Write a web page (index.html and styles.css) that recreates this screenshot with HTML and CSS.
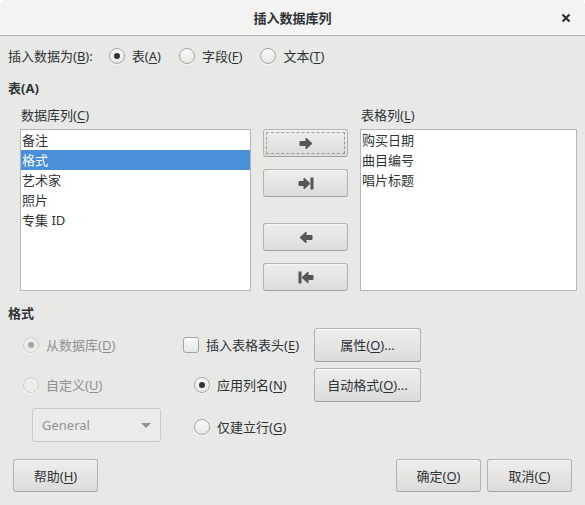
FILE: index.html
```html
<!DOCTYPE html>
<html lang="zh">
<head>
<meta charset="utf-8">
<title>插入数据库列</title>
<link rel="stylesheet" href="styles.css">
</head>
<body>
<div class="window">
  <div class="titlebar">
    <span class="title">插入数据库列</span>
    <span class="close">
      <svg width="10" height="10" viewBox="0 0 10 10"><path d="M1.5 1.5L8.5 8.5M8.5 1.5L1.5 8.5" stroke="#2e3436" stroke-width="2.2" stroke-linecap="butt"/></svg>
    </span>
  </div>
  <div class="content">
    <div class="insert-as">
      <span class="insert-label">插入数据为(<u>B</u>):</span>
      <span class="radio-item"><span class="radio checked"></span><span>表(<u>A</u>)</span></span>
      <span class="radio-item"><span class="radio"></span><span>字段(<u>F</u>)</span></span>
      <span class="radio-item"><span class="radio"></span><span>文本(<u>T</u>)</span></span>
    </div>

    <div class="section-title first">表(A)</div>

    <div class="columns">
      <div class="col-label">数据库列(<u>C</u>)</div>
      <div></div>
      <div class="col-label">表格列(<u>L</u>)</div>

      <div class="listbox">
        <div class="item">备注</div>
        <div class="item selected">格式</div>
        <div class="item">艺术家</div>
        <div class="item">照片</div>
        <div class="item">专集 ID</div>
      </div>

      <div class="movebtns">
        <div class="btn move focus">
          <svg width="14" height="13" viewBox="0 0 14 13"><path d="M1 4.5h6V1l6 5.5-6 5.5V8.5H1z" fill="#555753" stroke="#555753" stroke-width="1" stroke-linejoin="round"/></svg>
        </div>
        <div class="btn move gap-small">
          <svg width="16" height="13" viewBox="0 0 16 13"><path d="M1 4.5h5V1l6 5.5-6 5.5V8.5H1z" fill="#555753" stroke="#555753" stroke-width="1" stroke-linejoin="round"/><rect x="12.5" y="0.5" width="3" height="12" fill="#555753"/></svg>
        </div>
        <div class="btn move gap-large">
          <svg width="14" height="13" viewBox="0 0 14 13"><path d="M13 4.5H7V1L1 6.5 7 12V8.5h6z" fill="#555753" stroke="#555753" stroke-width="1" stroke-linejoin="round"/></svg>
        </div>
        <div class="btn move gap-small">
          <svg width="16" height="13" viewBox="0 0 16 13"><rect x="0.5" y="0.5" width="3" height="12" fill="#555753"/><path d="M15 4.5h-5V1L4 6.5 10 12V8.5h5z" fill="#555753" stroke="#555753" stroke-width="1" stroke-linejoin="round"/></svg>
        </div>
      </div>

      <div class="listbox">
        <div class="item">购买日期</div>
        <div class="item">曲目编号</div>
        <div class="item">唱片标题</div>
      </div>
    </div>

    <div class="section-title second">格式</div>

    <div class="format-grid">
      <span class="radio-item disabled"><span class="radio checked"></span><span>从数据库(<u>D</u>)</span></span>
      <span class="radio-item"><span class="checkbox"></span><span>插入表格表头(<u>E</u>)</span></span>
      <div class="btn fmt">属性(<u>O</u>)...</div>

      <span class="radio-item disabled"><span class="radio"></span><span>自定义(<u>U</u>)</span></span>
      <span class="radio-item indent"><span class="radio checked"></span><span>应用列名(<u>N</u>)</span></span>
      <div class="btn fmt">自动格式(<u>O</u>)...</div>

      <div class="combo"><span>General</span><span class="caret"></span></div>
      <span class="radio-item indent low"><span class="radio"></span><span>仅建立行(<u>G</u>)</span></span>
      <div></div>
    </div>

    <div class="footer">
      <div class="btn foot">帮助(<u>H</u>)</div>
      <div class="foot-right">
        <div class="btn foot">确定(<u>O</u>)</div>
        <div class="btn foot">取消(<u>C</u>)</div>
      </div>
    </div>
  </div>
</div>
</body>
</html>
```

FILE: styles.css
```css
html, body {
  margin: 0;
  padding: 0;
  background: #ffffff;
}

body {
  font-family: "Noto Sans", "Noto Sans CJK SC", sans-serif;
  font-size: 13px;
  line-height: 18px;
  color: #2e3436;
}

u {
  text-decoration: underline;
  text-underline-offset: 2px;
  text-decoration-thickness: 1px;
}

.window {
  width: 585px;
  height: 505px;
  background: #e8e8e7;
  border-radius: 6px 6px 0 0;
  overflow: hidden;
}

.titlebar {
  height: 35px;
  background: #f3f3f2;
  border-bottom: 1px solid #b5b5b3;
  display: grid;
  grid-template-columns: 1fr auto 1fr;
  align-items: center;
}

.title {
  grid-column: 2;
  font-weight: bold;
}

.close {
  grid-column: 3;
  justify-self: end;
  margin-right: 14px;
  display: flex;
}

.insert-as {
  height: 40px;
  display: flex;
  align-items: center;
  padding-left: 8px;
}

.insert-label {
  margin-right: 16px;
}

.insert-as .radio-item {
  margin-right: 18px;
}

.radio-item {
  display: flex;
  align-items: center;
  gap: 7px;
  white-space: nowrap;
}

.radio {
  width: 14px;
  height: 14px;
  border-radius: 50%;
  border: 1px solid #a5a5a3;
  background: linear-gradient(#fbfbfb, #e6e6e5);
  box-shadow: 0 1px 0 rgba(255,255,255,0.6);
  display: flex;
  align-items: center;
  justify-content: center;
  flex: none;
}

.radio.checked::after {
  content: "";
  width: 6px;
  height: 6px;
  border-radius: 50%;
  background: #2e3436;
}

.checkbox {
  width: 14px;
  height: 14px;
  border-radius: 3px;
  border: 1px solid #a5a5a3;
  background: linear-gradient(#fbfbfb, #e6e6e5);
  flex: none;
}

.radio-item.disabled {
  color: #8e9192;
}

.radio-item.disabled .radio {
  border-color: #cdcdcb;
  background: #ececeb;
}

.radio-item.disabled .radio.checked::after {
  background: #a3a5a6;
}

.section-title {
  font-weight: bold;
  padding-left: 8px;
}

.section-title.first {
  margin-top: 3px;
}

.section-title.second {
  margin-top: 13px;
}

.columns {
  margin-top: 9px;
  padding-left: 20px;
  display: grid;
  grid-template-columns: 231px 85px 217px;
  column-gap: 12px;
  row-gap: 5px;
}

.col-label {
  padding-left: 1px;
}

.listbox {
  height: 160px;
  background: #ffffff;
  border: 1px solid #b6b6b3;
}

.item {
  height: 20px;
  line-height: 20px;
  padding-left: 1px;
  white-space: nowrap;
}

.item.selected {
  background: #4a90d9;
  color: #ffffff;
}

.movebtns {
  display: flex;
  flex-direction: column;
}

.btn {
  box-sizing: border-box;
  border: 1px solid #b2b2b0;
  border-bottom-color: #a3a3a1;
  border-radius: 3px;
  background: linear-gradient(#eeeeed, #dcdcdb);
  box-shadow: inset 0 1px 0 rgba(255,255,255,0.5);
  display: flex;
  align-items: center;
  justify-content: center;
  white-space: nowrap;
}

.btn.move {
  height: 28px;
}

.btn.move.gap-small {
  margin-top: 12px;
}

.btn.move.gap-large {
  margin-top: 26px;
}

.btn.focus {
  outline: 1px dashed rgba(46, 52, 54, 0.4);
  outline-offset: -4px;
}

.format-grid {
  margin-top: 6px;
  padding-left: 23px;
  display: grid;
  grid-template-columns: 160px 131px 107px;
  grid-template-rows: 33px 33px 34px;
  row-gap: 7px;
  align-items: center;
}

.btn.fmt {
  height: 34px;
}

.radio-item.indent {
  margin-left: 11px;
}

.radio-item.low {
  margin-top: 3px;
}

.combo {
  box-sizing: border-box;
  height: 34px;
  width: 129px;
  margin-left: 9px;
  border: 1px solid #cbcbc9;
  border-radius: 3px;
  background: #ebebea;
  color: #939596;
  display: flex;
  align-items: center;
  justify-content: space-between;
  padding: 0 8px 0 9px;
}

.caret {
  width: 0;
  height: 0;
  border-left: 5px solid transparent;
  border-right: 5px solid transparent;
  border-top: 5px solid #8e9192;
  margin-right: 1px;
}

.footer {
  margin-top: 17px;
  padding: 0 13px;
  display: flex;
  justify-content: space-between;
}

.foot-right {
  display: flex;
  gap: 6px;
}

.btn.foot {
  width: 85px;
  height: 33px;
}
```
